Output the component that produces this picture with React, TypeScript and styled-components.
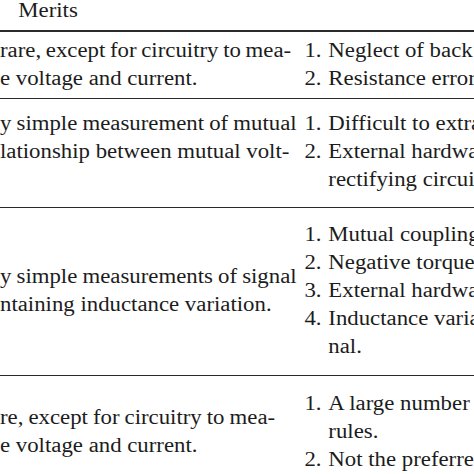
import React from "react";
import styled, { createGlobalStyle } from "styled-components";

const GlobalStyle = createGlobalStyle`
  html, body {
    margin: 0;
    padding: 0;
    background: #fff;
    overflow: hidden;
  }
`;

type LeftLine = { t: string; ws?: number };
type RowData = { pt: number; pb: number; left: LeftLine[]; right: string[][] };

const rows: RowData[] = [
  {
    pt: 4,
    pb: 6,
    left: [{ t: "rare, except for circuitry to mea-", ws: -0.9 }, { t: "e voltage and current." }],
    right: [["Neglect of back EMF."], ["Resistance error."]],
  },
  {
    pt: 10,
    pb: 14,
    left: [
      { t: "y simple measurement of mutual", ws: -0.5 },
      { t: "lationship between mutual volt-" },
      { t: "\u00a0" },
    ],
    right: [["Difficult to extract back EMF."], ["External hardware such as", "rectifying circuits."]],
  },
  {
    pt: 12,
    pb: 15,
    left: [{ t: "y simple measurements of signal", ws: -0.5 }, { t: "ntaining inductance variation." }],
    right: [
      ["Mutual coupling effect."],
      ["Negative torque generation."],
      ["External hardware is needed."],
      ["Inductance variation of sig-", "nal."],
    ],
  },
  {
    pt: 13,
    pb: 12,
    left: [{ t: "re, except for circuitry to mea-", ws: -0.6 }, { t: "e voltage and current." }],
    right: [["A large number of fuzzy", "rules."], ["Not the preferred method."]],
  },
];

const App = () => {
  return (
    <Page>
      <GlobalStyle />
      <Table>
        <Head>Merits</Head>
        {rows.map((r, i) => (
          <Row key={i} $pt={r.pt} $pb={r.pb} $last={i === rows.length - 1}>
            <Desc>
              {r.left.map((l, j) => (
                <Line key={j} $ws={l.ws}>
                  {l.t}
                </Line>
              ))}
            </Desc>
            <Items>
              {r.right.map((item, j) => (
                <Item key={j}>
                  <Num>{j + 1}.</Num>
                  <span>
                    {item.map((part, k) => (
                      <Line key={k}>{part}</Line>
                    ))}
                  </span>
                </Item>
              ))}
            </Items>
          </Row>
        ))}
      </Table>
    </Page>
  );
};

export default App;

const Page = styled.div`
  width: 474px;
  height: 474px;
  overflow: hidden;
  background: #fff;
`;

const Table = styled.div`
  width: 416px;
  transform: scaleX(1.14);
  transform-origin: 0 0;
  font-family: "Liberation Serif", "Times New Roman", serif;
  font-size: 20px;
  line-height: 28px;
  color: #1c1c1c;
`;

const Head = styled.div`
  margin-top: -4px;
  padding: 0 0 6px 16px;
  border-bottom: 2px solid #2a2a2a;
`;

const Row = styled.div<{ $pt: number; $pb: number; $last?: boolean }>`
  display: grid;
  grid-template-columns: 267px 1fr;
  align-items: center;
  padding: ${(p) => p.$pt}px 0 ${(p) => p.$pb}px;
  border-bottom: ${(p) => (p.$last ? "none" : "1.5px solid #2a2a2a")};
`;

const Desc = styled.div`
  overflow: hidden;
`;

const Line = styled.span<{ $ws?: number }>`
  display: block;
  white-space: nowrap;
  word-spacing: ${(p) => p.$ws ?? 0}px;
`;

const Items = styled.ol`
  list-style: none;
  margin: 0;
  padding: 0;
  white-space: nowrap;
`;

const Item = styled.li`
  display: grid;
  grid-template-columns: 21px auto;
`;

const Num = styled.span``;
